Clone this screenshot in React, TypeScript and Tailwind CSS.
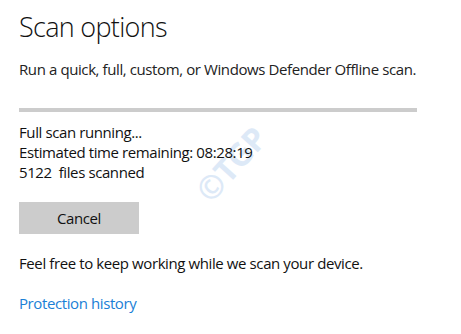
import React from "react";

export default function App() {
  return (
    <div className="relative w-[461px] h-[334px] bg-white overflow-hidden" style={{ fontFamily: '"Open Sans", "Noto Sans", sans-serif' }}>
      <div className="absolute left-[186px] top-[144px] w-[90px] text-center -rotate-[48deg] text-[32px] leading-[40px] font-bold tracking-[-0.5px] text-[#dde9f7] select-none pointer-events-none">©TGP</div>
      <div className="relative flex flex-col pl-[19px] pt-[9px]">
        <h1 className="text-[27px] leading-[36px] font-light tracking-[-0.7px] text-[#111]">Scan options</h1>
        <p className="mt-[14px] text-[15px] leading-[20px] tracking-[-0.4px] text-[#222]">Run a quick, full, custom, or Windows Defender Offline scan.</p>
        <div className="mt-[29px] w-[398px] h-[4px] bg-[#cccccc]" />
        <div className="mt-[10px] flex flex-col text-[15px] leading-[20px] tracking-[-0.4px] text-[#111]">
          <span>Full scan running...</span>
          <span>Estimated time remaining: 08:28:19</span>
          <span>5122&nbsp; files scanned</span>
        </div>
        <button className="mt-[20px] w-[120px] h-[32px] bg-[#cccccc] text-[15px] tracking-[-0.4px] text-[#111]">Cancel</button>
        <p className="mt-[19px] text-[15px] leading-[20px] tracking-[-0.4px] text-[#111]">Feel free to keep working while we scan your device.</p>
        <a className="mt-[20px] text-[15px] leading-[20px] tracking-[-0.4px] text-[#1a80d6] w-fit">Protection history</a>
      </div>
    </div>
  );
}
